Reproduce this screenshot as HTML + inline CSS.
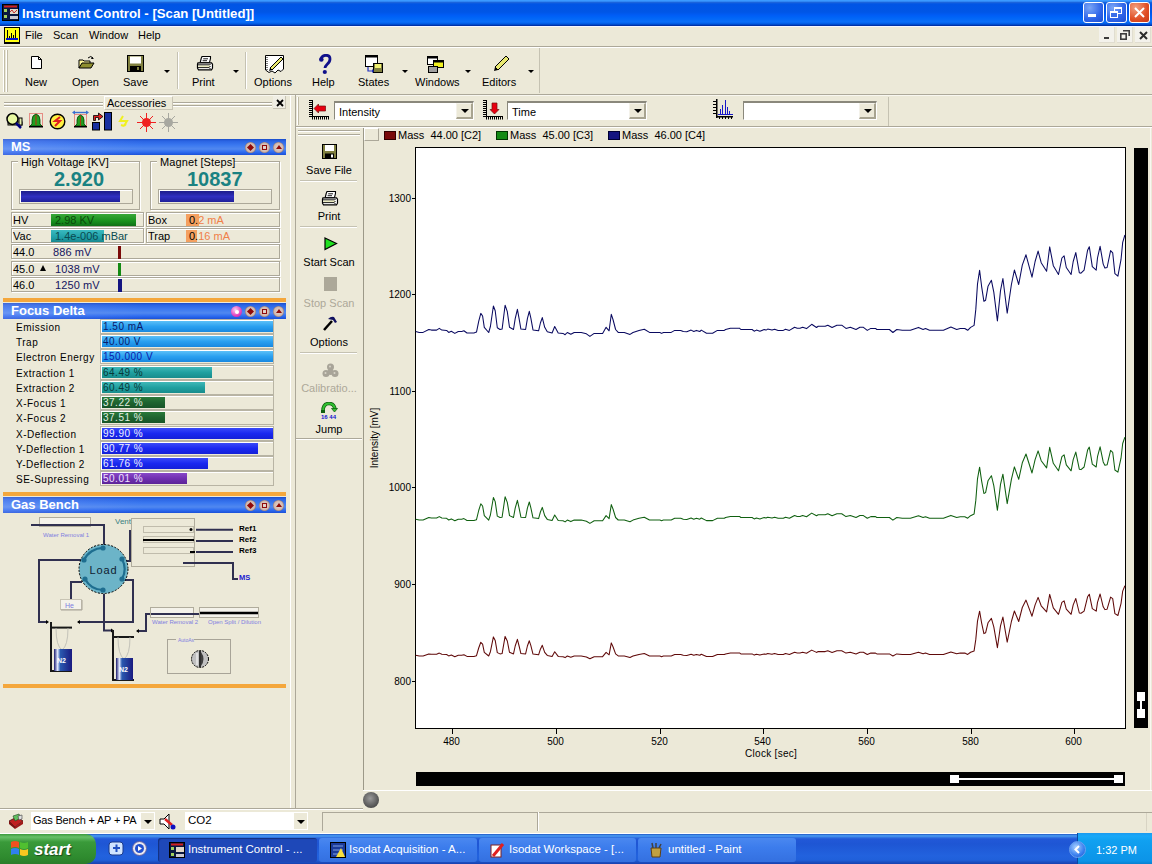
<!DOCTYPE html>
<html><head><meta charset="utf-8">
<style>
*{margin:0;padding:0;box-sizing:border-box}
html,body{width:1152px;height:864px;overflow:hidden}
body{background:#ECE9D8;font-family:"Liberation Sans",sans-serif;font-size:11px;color:#000;position:relative}
.a{position:absolute}
.t{position:absolute;white-space:nowrap;line-height:1}
</style></head><body>

<!-- TITLE BAR -->
<div class="a" style="left:0;top:0;width:1152px;height:26px;background:linear-gradient(#3C9CFF 0,#3A98FF 1px,#1A64DC 2.5px,#0055E5 4px,#0056E6 12px,#005CF5 15px,#0066F8 18px,#0A6EF8 22px,#0058E0 24px,#0032A8 25.5px,#0032A8 26px)"></div>
<div class="t" style="left:22px;top:7px;font-size:13.2px;font-weight:bold;color:#fff">Instrument Control - [Scan [Untitled]]</div>


<svg class="a" style="left:2px;top:4px" width="17" height="17" viewBox="0 0 17 17"><rect x="0.5" y="0.5" width="16" height="16" fill="#0A1840" stroke="#000"/><rect x="2" y="1.5" width="13" height="2" fill="#D02020"/><rect x="2" y="5" width="3" height="3" fill="#A0D060"/><rect x="2" y="11" width="3" height="3" fill="#A0D060"/><rect x="8" y="5" width="8" height="5" fill="#E0D8C8"/><path d="M8 8L10 6L12 9L15 6" stroke="#C03030" fill="none"/><rect x="8" y="12" width="8" height="3" fill="#C8C8D0"/></svg>
<!-- window buttons -->
<div class="a" style="left:1083px;top:2px;width:21px;height:21px;border:1px solid #fff;border-radius:3px;background:radial-gradient(circle at 30% 25%,#7AA6F6,#2E64E8 60%,#1E4FD0)"></div>
<div class="a" style="left:1088px;top:14px;width:8px;height:3px;background:#fff"></div>
<div class="a" style="left:1106px;top:2px;width:21px;height:21px;border:1px solid #fff;border-radius:3px;background:radial-gradient(circle at 30% 25%,#7AA6F6,#2E64E8 60%,#1E4FD0)"></div>
<div class="a" style="left:1114px;top:7px;width:8px;height:7px;border:1px solid #fff;border-top-width:2px"></div>
<div class="a" style="left:1110px;top:11px;width:8px;height:7px;border:1px solid #fff;border-top-width:2px;background:#3A6EE8"></div>
<div class="a" style="left:1129px;top:2px;width:21px;height:21px;border:1px solid #fff;border-radius:3px;background:radial-gradient(circle at 30% 25%,#F2A080,#E04E24 60%,#C83A18)"></div>
<svg class="a" style="left:1129px;top:2px" width="21" height="21" viewBox="0 0 21 21"><path d="M6 6L15 15M15 6L6 15" stroke="#fff" stroke-width="2"/></svg>
<!-- menu icon -->
<svg class="a" style="left:4px;top:27px" width="17" height="17" viewBox="0 0 17 17"><rect x="0" y="0" width="16" height="17" fill="#000"/><rect x="1" y="1" width="14" height="14" fill="#FFFF10"/><rect x="3" y="3" width="1" height="9" fill="#000"/><rect x="5" y="9" width="1" height="3" fill="#000"/><rect x="7" y="6" width="1" height="6" fill="#000"/><rect x="9" y="8" width="1" height="4" fill="#000"/><rect x="11" y="3" width="1" height="9" fill="#000"/><rect x="2" y="11" width="12" height="2" fill="#0010D0"/></svg>
<!-- MENU BAR -->
<div class="a" style="left:0;top:26px;width:1152px;height:1px;background:#F4F6FF"></div>
<div class="t" style="left:25px;top:30px;font-size:11px">File</div>
<div class="t" style="left:53px;top:30px;font-size:11px">Scan</div>
<div class="t" style="left:89px;top:30px;font-size:11px">Window</div>
<div class="t" style="left:138px;top:30px;font-size:11px">Help</div>
<div class="a" style="left:0;top:46px;width:1152px;height:1px;background:#ACA899"></div>
<div class="a" style="left:0;top:47px;width:1152px;height:1px;background:#fff"></div>

<!-- MDI buttons -->
<div class="a" style="left:1099px;top:27px;width:16px;height:16px;background:#F3F2EC;border-right:1px solid #E0DDD0;border-bottom:1px solid #E0DDD0"></div>
<div class="a" style="left:1117px;top:27px;width:16px;height:16px;background:#F3F2EC;border-right:1px solid #E0DDD0;border-bottom:1px solid #E0DDD0"></div>
<div class="a" style="left:1135px;top:27px;width:16px;height:16px;background:#F3F2EC;border-right:1px solid #E0DDD0;border-bottom:1px solid #E0DDD0"></div>
<div class="a" style="left:1104px;top:37px;width:5px;height:2px;background:#3C3C3C"></div>
<svg class="a" style="left:1120px;top:30px" width="10" height="10" viewBox="0 0 10 10"><path d="M3 0.8H9.2V6" fill="none" stroke="#3C3C3C" stroke-width="1.6"/><rect x="0.8" y="3.8" width="5.4" height="5.4" fill="none" stroke="#3C3C3C" stroke-width="1.6"/></svg>
<svg class="a" style="left:1139px;top:31px" width="9" height="9" viewBox="0 0 9 9"><path d="M1 1L8 8M8 1L1 8" stroke="#2C2C2C" stroke-width="2"/></svg>
<!-- TOOLBAR -->
<!-- grip -->
<div class="a" style="left:3px;top:50px;width:2px;height:42px;border-left:1px solid #fff;border-right:1px solid #C1BCA8"></div>
<div class="a" style="left:6px;top:50px;width:2px;height:42px;border-left:1px solid #fff;border-right:1px solid #C1BCA8"></div>
<!-- New -->
<svg class="a" style="left:30px;top:55px" width="13" height="15" viewBox="0 0 13 15"><path d="M1.5 1.5H8.5L11.5 4.5V13.5H1.5Z" fill="#fff" stroke="#000"/><path d="M8.5 1.5V4.5H11.5" fill="none" stroke="#000"/></svg>
<div class="t" style="left:25px;top:77px">New</div>
<!-- Open -->
<svg class="a" style="left:78px;top:55px" width="18" height="15" viewBox="0 0 18 15"><path d="M1 5H5L6 6H12V9H4L1 13Z" fill="#FFF799" stroke="#000" stroke-width="1"/><path d="M1 13L4 8H16L13 13Z" fill="#8E8E2E" stroke="#000" stroke-width="1"/><path d="M10 3Q13 0 15 3" fill="none" stroke="#000"/><path d="M14 2L16 4L13 4Z" fill="#000"/></svg>
<div class="t" style="left:72px;top:77px">Open</div>
<!-- Save -->
<svg class="a" style="left:127px;top:55px" width="17" height="17" viewBox="0 0 17 17"><rect x="0.5" y="0.5" width="16" height="16" fill="#808040" stroke="#000"/><rect x="3" y="1.5" width="11" height="7" fill="#fff"/><rect x="3" y="11" width="11" height="5" fill="#000"/><rect x="10" y="12" width="2" height="3" fill="#808040"/></svg>
<div class="t" style="left:123px;top:77px">Save</div>
<div class="a" style="left:164px;top:70px;width:0;height:0;border-left:3px solid transparent;border-right:3px solid transparent;border-top:3px solid #000"></div>
<div class="a" style="left:177px;top:52px;width:2px;height:37px;border-left:1px solid #C5C2B2;border-right:1px solid #fff"></div>
<!-- Print -->
<svg class="a" style="left:192px;top:52px" width="28" height="20" viewBox="0 0 28 20"><path d="M10 4.5H18.5V6.5L17.5 10.5H8.2L9.2 6.5Z" fill="#fff" stroke="#000" stroke-width="1.1"/><path d="M11.2 6.8H16M10.6 8.7H15" stroke="#000" stroke-width="0.9"/><path d="M6 10.8H19.5L20.5 12.2V16.2L19.5 17.8H6.5L5.5 16.2V12.2Z" fill="#fff" stroke="#000" stroke-width="1.2"/><rect x="6.5" y="13.3" width="11.5" height="2" fill="#ECECC0"/><path d="M6 12.8H17.5M6 15.6H17.5" stroke="#000" stroke-width="0.9"/><path d="M18 12V17" stroke="#000" stroke-dasharray="1 1" stroke-width="1"/></svg>
<div class="t" style="left:192px;top:77px">Print</div>
<div class="a" style="left:233px;top:70px;width:0;height:0;border-left:3px solid transparent;border-right:3px solid transparent;border-top:3px solid #000"></div>
<div class="a" style="left:245px;top:52px;width:2px;height:37px;border-left:1px solid #C5C2B2;border-right:1px solid #fff"></div>
<!-- Options -->
<svg class="a" style="left:264px;top:54px" width="21" height="21" viewBox="0 0 21 21"><path d="M1.5 1.5H19.5V15L17 17.5L14 16L11 19L8 17L5 18.5L1.5 16Z" fill="#fff" stroke="#000"/><path d="M3 3V16" stroke="#000" stroke-dasharray="1 1"/><path d="M6 14L17 3L19 5L8 16Z" fill="#E8E870" stroke="#000"/><path d="M6 14L5 17L8 16Z" fill="#000"/></svg>
<div class="t" style="left:254px;top:77px">Options</div>
<!-- Help -->
<svg class="a" style="left:318px;top:54px" width="14" height="21" viewBox="0 0 14 21"><path d="M3 5Q4 1.3 8 1.3Q12 1.3 12 5Q12 8 9 10.5Q7 12.5 7 14" fill="none" stroke="#10108A" stroke-width="2.8"/><circle cx="3.3" cy="5.5" r="2.3" fill="#10108A"/><circle cx="6.8" cy="18" r="2.1" fill="#10108A"/></svg>
<div class="t" style="left:312px;top:77px">Help</div>
<!-- States -->
<svg class="a" style="left:364px;top:54px" width="20" height="20" viewBox="0 0 20 20"><rect x="1.5" y="1.5" width="12" height="11" fill="#fff" stroke="#000"/><rect x="1.5" y="1.5" width="12" height="2" fill="#000"/><rect x="9.5" y="9.5" width="9" height="9" fill="#808040" stroke="#000"/><rect x="11" y="10" width="6" height="4" fill="#F0F070"/><path d="M4 13V17H9" fill="none" stroke="#2030C0" stroke-width="1.2"/><path d="M8 15L10 17L8 19Z" fill="#2030C0"/></svg>
<div class="t" style="left:358px;top:77px">States</div>
<div class="a" style="left:402px;top:70px;width:0;height:0;border-left:3px solid transparent;border-right:3px solid transparent;border-top:3px solid #000"></div>
<!-- Windows -->
<svg class="a" style="left:427px;top:56px" width="18" height="17" viewBox="0 0 18 17"><rect x="0.5" y="0.5" width="10" height="8" fill="#fff" stroke="#000"/><rect x="0.5" y="0.5" width="10" height="2" fill="#000"/><rect x="6.5" y="4.5" width="10" height="7" fill="#F0F020" stroke="#000"/><rect x="6.5" y="4.5" width="10" height="2" fill="#000"/><rect x="1.5" y="10.5" width="9" height="6" fill="#A0A0A0" stroke="#000"/></svg>
<div class="t" style="left:415px;top:77px">Windows</div>
<div class="a" style="left:465px;top:70px;width:0;height:0;border-left:3px solid transparent;border-right:3px solid transparent;border-top:3px solid #000"></div>
<!-- Editors -->
<svg class="a" style="left:493px;top:55px" width="17" height="17" viewBox="0 0 17 17"><path d="M2 12L13 1L16 4L5 15Z" fill="#E8E870" stroke="#000"/><path d="M2 12L1 16L5 15Z" fill="#000"/></svg>
<div class="t" style="left:482px;top:77px">Editors</div>
<div class="a" style="left:528px;top:70px;width:0;height:0;border-left:3px solid transparent;border-right:3px solid transparent;border-top:3px solid #000"></div>
<div class="a" style="left:539px;top:48px;width:1px;height:45px;background:#C5C2B2"></div>

<div class="a" style="left:0;top:94px;width:1152px;height:1px;background:#ACA899"></div>
<div class="a" style="left:0;top:95px;width:1152px;height:1px;background:#F8F7F0"></div>

<!-- LEFT PANEL -->
<style>
.grip{position:absolute;height:2px;border-top:1px solid #ACA899;border-bottom:1px solid #fff}
.etch{position:absolute;border:1px solid #ACA899;box-shadow:inset 1px 1px 0 #fff,1px 1px 0 #fff}
.hdr{position:absolute;left:3px;width:283px;height:16px;background:linear-gradient(90deg,rgba(200,200,255,0.22),rgba(200,200,255,0.08) 30%,rgba(200,200,255,0) 50%),linear-gradient(#1A4CC8 0,#2A64E4 2px,#3A78F0 6px,#5088F0 10px,#2E6CF0 13px,#1A50D8 16px)}
.hdr span{position:absolute;left:8px;top:1px;font-size:13px;font-weight:bold;color:#fff;line-height:14px}
.orn{position:absolute;left:3px;width:283px;height:4px;background:#F4A73C}
.hb{position:absolute;width:11px;height:11px;border-radius:50%;background:radial-gradient(circle at 50% 50%,#E8D8D0 0,#D0B8B0 55%,#806058 80%,#5A4848 100%)}
.hb i{position:absolute;left:3px;top:3px;width:5px;height:5px;background:#900A0A}
.rowt{position:absolute;font-size:11px;line-height:12px;white-space:nowrap}
</style>
<div class="grip" style="left:4px;top:102px;width:99px"></div>
<div class="grip" style="left:4px;top:105px;width:99px"></div>
<div class="grip" style="left:173px;top:102px;width:99px"></div>
<div class="grip" style="left:173px;top:105px;width:99px"></div>
<div class="a" style="left:104px;top:96px;width:69px;height:14px;border-right:1px solid #C8C4B4;border-bottom:1px solid #C8C4B4;border-top:1px solid #fff;border-left:1px solid #fff"></div>
<div class="t" style="left:107px;top:98px;font-size:11px">Accessories</div>
<div class="a" style="left:273px;top:96px;width:13px;height:13px;border-right:1px solid #C8C4B4;border-bottom:1px solid #C8C4B4;background:#F0EEE4"></div>
<svg class="a" style="left:276px;top:99px" width="8" height="8" viewBox="0 0 8 8"><path d="M1 1L7 7M7 1L1 7" stroke="#000" stroke-width="1.8"/></svg>
<!-- accessory icons -->
<svg class="a" style="left:5px;top:112px" width="18" height="18" viewBox="0 0 18 18"><rect x="3" y="10" width="14" height="3" fill="#E8F0B0" stroke="#000" stroke-width="1"/><rect x="14" y="6" width="3" height="7" fill="#E8F0B0" stroke="#000" stroke-width="1"/><circle cx="7.5" cy="7" r="5.5" fill="#E8F8A0" stroke="#000" stroke-width="1.5"/><path d="M11 11L16 16" stroke="#000080" stroke-width="2.5"/></svg>
<svg class="a" style="left:28px;top:112px" width="16" height="16" viewBox="0 0 16 16"><rect x="1.5" y="1.5" width="13" height="13" fill="none" stroke="#E03030" stroke-dasharray="1 1"/><path d="M8 2Q4 3 4 8V12L2 14H14L12 12V8Q12 3 8 2Z" fill="#20A020" stroke="#004000" stroke-width="0.8"/><rect x="7.4" y="3" width="1.2" height="10" fill="#A04010"/><rect x="1" y="14" width="14" height="1.5" fill="#000"/></svg>
<svg class="a" style="left:49px;top:113px" width="17" height="17" viewBox="0 0 17 17"><circle cx="8.5" cy="8.5" r="7.3" fill="#FFF040" stroke="#000" stroke-width="1.4"/><path d="M11 4L6 8H11L6 13" fill="none" stroke="#E02020" stroke-width="2"/></svg>
<svg class="a" style="left:71px;top:110px" width="19" height="19" viewBox="0 0 19 19"><path d="M2 2.5H17" stroke="#3A70D0" stroke-width="1.4"/><path d="M1 2.5L4 0.5V4.5Z M18 2.5L15 0.5V4.5Z" fill="#3A70D0"/><rect x="3.5" y="4.5" width="12" height="12" fill="none" stroke="#E03030" stroke-dasharray="1 1"/><path d="M9.5 5Q6 6 6 10V14L4 16H15L13 14V10Q13 6 9.5 5Z" fill="#20A020" stroke="#004000" stroke-width="0.8"/><rect x="8.9" y="6" width="1.2" height="10" fill="#A04010"/><rect x="3" y="16" width="13" height="1.5" fill="#000"/></svg>
<svg class="a" style="left:92px;top:110px" width="21" height="21" viewBox="0 0 21 21"><rect x="0.5" y="12.5" width="7" height="7.5" fill="#1830A0" stroke="#000"/><rect x="12.5" y="2.5" width="7" height="17.5" fill="#1830A0" stroke="#000"/><path d="M1.5 10.5V5.5H6.5V3L11 6.5L6.5 10V7.5H3.5V10.5Z" fill="#E02020" stroke="#000" stroke-width="0.8"/></svg>
<svg class="a" style="left:117px;top:115px" width="14" height="13" viewBox="0 0 14 13"><path d="M6 1L3 6H10L7 11M7 11L4 10M7 11L9 9" fill="none" stroke="#F0F020" stroke-width="2"/></svg>
<svg class="a" style="left:137px;top:113px" width="19" height="19" viewBox="0 0 19 19"><path d="M9.5 0V19M0 9.5H19M3 3L16 16M16 3L3 16" stroke="#F02020" stroke-width="1"/><circle cx="9.5" cy="9.5" r="4.5" fill="#F02020"/></svg>
<svg class="a" style="left:159px;top:113px" width="19" height="19" viewBox="0 0 19 19"><path d="M9.5 0V19M0 9.5H19M3 3L16 16M16 3L3 16" stroke="#A8A8A0" stroke-width="1"/><circle cx="9.5" cy="9.5" r="4.5" fill="#A8A8A0"/></svg>

<!-- MS -->
<div class="hdr" style="top:139px"><span>MS</span></div>
<div class="hb" style="left:245px;top:142px"><i style="transform:rotate(45deg);left:3px;top:3px"></i></div>
<div class="hb" style="left:259px;top:142px"><i style="background:none;border:1.5px solid #900A0A"></i></div>
<div class="hb" style="left:273px;top:142px"><i style="background:none;width:0;height:0;border-left:3px solid transparent;border-right:3px solid transparent;border-bottom:4px solid #900A0A;left:2.5px;top:3px"></i></div>
<div class="etch" style="left:11px;top:161px;width:129px;height:49px"></div>
<div class="a" style="left:18px;top:157px;width:92px;height:8px;background:#ECE9D8"></div>
<div class="t" style="left:21px;top:157px;font-size:11px;letter-spacing:0.1px">High Voltage [KV]</div>
<div class="t" style="left:54px;top:169px;font-size:20px;font-weight:bold;color:#1A8282">2.920</div>
<div class="a" style="left:19px;top:189px;width:114px;height:15px;border:1px solid #ACA899;background:#ECE9D8;box-shadow:inset 1px 1px 0 #fff"></div>
<div class="a" style="left:21px;top:191px;width:99px;height:11px;background:linear-gradient(#1D1D8A,#3030C0 50%,#20209A)"></div>
<div class="etch" style="left:150px;top:161px;width:130px;height:49px"></div>
<div class="a" style="left:157px;top:157px;width:77px;height:8px;background:#ECE9D8"></div>
<div class="t" style="left:160px;top:157px;font-size:11px;letter-spacing:0.1px">Magnet [Steps]</div>
<div class="t" style="left:187px;top:169px;font-size:20px;font-weight:bold;color:#1A8282">10837</div>
<div class="a" style="left:158px;top:189px;width:114px;height:15px;border:1px solid #ACA899;background:#ECE9D8;box-shadow:inset 1px 1px 0 #fff"></div>
<div class="a" style="left:160px;top:191px;width:74px;height:11px;background:linear-gradient(#1D1D8A,#3030C0 50%,#20209A)"></div>

<div class="etch" style="left:11px;top:212px;width:133px;height:15px"></div>
<div class="a" style="left:51px;top:214px;width:85px;height:12px;background:linear-gradient(#3AA83A,#18901E 60%,#107018)"></div>
<div class="rowt" style="left:13px;top:214px">HV</div>
<div class="rowt" style="left:55px;top:214px;color:#0A4A0A">2.98 KV</div>
<div class="etch" style="left:11px;top:228px;width:133px;height:15px"></div>
<div class="a" style="left:51px;top:230px;width:53px;height:12px;background:linear-gradient(#3ABAC0,#20A0A8 60%,#188890)"></div>
<div class="rowt" style="left:13px;top:230px">Vac</div>
<div class="rowt" style="left:55px;top:230px;color:#0A4A50">1.4e-006 mBar</div>
<div class="etch" style="left:146px;top:212px;width:134px;height:15px"></div>
<div class="a" style="left:186px;top:214px;width:13px;height:12px;background:#F4A060"></div>
<div class="rowt" style="left:148px;top:214px">Box</div>
<div class="rowt" style="left:189px;top:214px;color:#F08048"><span style="color:#000">0.</span>2 mA</div>
<div class="etch" style="left:146px;top:228px;width:134px;height:15px"></div>
<div class="a" style="left:186px;top:230px;width:11px;height:12px;background:#F4A060"></div>
<div class="rowt" style="left:148px;top:230px">Trap</div>
<div class="rowt" style="left:189px;top:230px;color:#F08048"><span style="color:#000">0.</span>16 mA</div>

<div class="etch" style="left:11px;top:244px;width:269px;height:15px"></div>
<div class="rowt" style="left:13px;top:246px">44.0</div>
<div class="rowt" style="left:53px;top:246px;color:#141460;letter-spacing:0.1px">886 mV</div>
<div class="a" style="left:118px;top:246px;width:3px;height:13px;background:#7A0A0A"></div>
<div class="etch" style="left:11px;top:261px;width:269px;height:15px"></div>
<div class="rowt" style="left:13px;top:263px">45.0</div>
<div class="a" style="left:40px;top:265px;width:0;height:0;border-left:3px solid transparent;border-right:3px solid transparent;border-bottom:6px solid #000"></div>
<div class="rowt" style="left:55px;top:263px;color:#141460;letter-spacing:0.1px">1038 mV</div>
<div class="a" style="left:118px;top:263px;width:3px;height:13px;background:#148A14"></div>
<div class="etch" style="left:11px;top:277px;width:269px;height:15px"></div>
<div class="rowt" style="left:13px;top:279px">46.0</div>
<div class="rowt" style="left:55px;top:279px;color:#141460;letter-spacing:0.1px">1250 mV</div>
<div class="a" style="left:118px;top:279px;width:4px;height:13px;background:#141480"></div>

<div class="orn" style="top:298px"></div>
<!-- FOCUS DELTA -->
<div class="hdr" style="top:303px"><span>Focus Delta</span></div>
<div class="hb" style="left:231px;top:306px;background:radial-gradient(circle at 40% 35%,#F8D0F0,#E040C0 60%,#B02090)"><i style="background:#fff;border-radius:50%;left:3.5px;top:3.5px;width:4px;height:4px"></i></div>
<div class="hb" style="left:245px;top:306px"><i style="transform:rotate(45deg)"></i></div>
<div class="hb" style="left:259px;top:306px"><i style="background:none;border:1.5px solid #900A0A"></i></div>
<div class="hb" style="left:273px;top:306px"><i style="background:none;width:0;height:0;border-left:3px solid transparent;border-right:3px solid transparent;border-bottom:4px solid #900A0A;left:2.5px;top:3px"></i></div>
<div class="rowt" style="left:16px;top:322px;font-size:10px;letter-spacing:0.5px">Emission</div>
<div class="a" style="left:100px;top:319px;width:174px;height:15px;border:1px solid #B8B4A4;box-shadow:inset 1px 1px 0 #fff"></div>
<div class="a" style="left:102px;top:321px;width:171px;height:11px;background:linear-gradient(#5CC0F8,#2AA0F0 50%,#1888E0)"></div>
<div class="rowt" style="left:103px;top:321px;color:#0A1A6A;font-size:10px;letter-spacing:0.5px">1.50 mA</div>
<div class="rowt" style="left:16px;top:337px;font-size:10px;letter-spacing:0.5px">Trap</div>
<div class="a" style="left:100px;top:334px;width:174px;height:15px;border:1px solid #B8B4A4;box-shadow:inset 1px 1px 0 #fff"></div>
<div class="a" style="left:102px;top:336px;width:171px;height:11px;background:linear-gradient(#5CC0F8,#2AA0F0 50%,#1888E0)"></div>
<div class="rowt" style="left:103px;top:336px;color:#0A1A6A;font-size:10px;letter-spacing:0.5px">40.00 V</div>
<div class="rowt" style="left:16px;top:352px;font-size:10px;letter-spacing:0.5px">Electron Energy</div>
<div class="a" style="left:100px;top:349px;width:174px;height:15px;border:1px solid #B8B4A4;box-shadow:inset 1px 1px 0 #fff"></div>
<div class="a" style="left:102px;top:351px;width:171px;height:11px;background:linear-gradient(#5CC0F8,#2AA0F0 50%,#1888E0)"></div>
<div class="rowt" style="left:103px;top:351px;color:#0A1AAA;font-size:10px;letter-spacing:0.5px">150.000 V</div>
<div class="rowt" style="left:16px;top:368px;font-size:10px;letter-spacing:0.5px">Extraction 1</div>
<div class="a" style="left:100px;top:365px;width:174px;height:15px;border:1px solid #B8B4A4;box-shadow:inset 1px 1px 0 #fff"></div>
<div class="a" style="left:102px;top:367px;width:110px;height:11px;background:linear-gradient(#40B8B8,#20A0A0 50%,#188C8C)"></div>
<div class="rowt" style="left:103px;top:367px;color:#083838;font-size:10px;letter-spacing:0.5px">64.49 %</div>
<div class="rowt" style="left:16px;top:383px;font-size:10px;letter-spacing:0.5px">Extraction 2</div>
<div class="a" style="left:100px;top:380px;width:174px;height:15px;border:1px solid #B8B4A4;box-shadow:inset 1px 1px 0 #fff"></div>
<div class="a" style="left:102px;top:382px;width:103px;height:11px;background:linear-gradient(#40B8B8,#20A0A0 50%,#188C8C)"></div>
<div class="rowt" style="left:103px;top:382px;color:#083838;font-size:10px;letter-spacing:0.5px">60.49 %</div>
<div class="rowt" style="left:16px;top:398px;font-size:10px;letter-spacing:0.5px">X-Focus 1</div>
<div class="a" style="left:100px;top:395px;width:174px;height:15px;border:1px solid #B8B4A4;box-shadow:inset 1px 1px 0 #fff"></div>
<div class="a" style="left:102px;top:397px;width:63px;height:11px;background:linear-gradient(#2A7A3A,#1E6430 50%,#185428)"></div>
<div class="rowt" style="left:103px;top:397px;color:#E0F0E0;font-size:10px;letter-spacing:0.5px">37.22 %</div>
<div class="rowt" style="left:16px;top:413px;font-size:10px;letter-spacing:0.5px">X-Focus 2</div>
<div class="a" style="left:100px;top:410px;width:174px;height:15px;border:1px solid #B8B4A4;box-shadow:inset 1px 1px 0 #fff"></div>
<div class="a" style="left:102px;top:412px;width:63px;height:11px;background:linear-gradient(#2A7A3A,#1E6430 50%,#185428)"></div>
<div class="rowt" style="left:103px;top:412px;color:#E0F0E0;font-size:10px;letter-spacing:0.5px">37.51 %</div>
<div class="rowt" style="left:16px;top:429px;font-size:10px;letter-spacing:0.5px">X-Deflection</div>
<div class="a" style="left:100px;top:426px;width:174px;height:15px;border:1px solid #B8B4A4;box-shadow:inset 1px 1px 0 #fff"></div>
<div class="a" style="left:102px;top:428px;width:171px;height:11px;background:linear-gradient(#3A4AF8,#1A28F0 50%,#1420D8)"></div>
<div class="rowt" style="left:103px;top:428px;color:#F0F0FF;font-size:10px;letter-spacing:0.5px">99.90 %</div>
<div class="rowt" style="left:16px;top:444px;font-size:10px;letter-spacing:0.5px">Y-Deflection 1</div>
<div class="a" style="left:100px;top:441px;width:174px;height:15px;border:1px solid #B8B4A4;box-shadow:inset 1px 1px 0 #fff"></div>
<div class="a" style="left:102px;top:443px;width:156px;height:11px;background:linear-gradient(#3A4AF8,#1A28F0 50%,#1420D8)"></div>
<div class="rowt" style="left:103px;top:443px;color:#F0F0FF;font-size:10px;letter-spacing:0.5px">90.77 %</div>
<div class="rowt" style="left:16px;top:459px;font-size:10px;letter-spacing:0.5px">Y-Deflection 2</div>
<div class="a" style="left:100px;top:456px;width:174px;height:15px;border:1px solid #B8B4A4;box-shadow:inset 1px 1px 0 #fff"></div>
<div class="a" style="left:102px;top:458px;width:106px;height:11px;background:linear-gradient(#3A4AF8,#1A28F0 50%,#1420D8)"></div>
<div class="rowt" style="left:103px;top:458px;color:#F0F0FF;font-size:10px;letter-spacing:0.5px">61.76 %</div>
<div class="rowt" style="left:16px;top:474px;font-size:10px;letter-spacing:0.5px">SE-Supressing</div>
<div class="a" style="left:100px;top:471px;width:174px;height:15px;border:1px solid #B8B4A4;box-shadow:inset 1px 1px 0 #fff"></div>
<div class="a" style="left:102px;top:473px;width:85px;height:11px;background:linear-gradient(#8848C8,#7030B0 50%,#5C2498)"></div>
<div class="rowt" style="left:103px;top:473px;color:#F0E0FF;font-size:10px;letter-spacing:0.5px">50.01 %</div>
<div class="orn" style="top:492px"></div>
<!-- GAS BENCH -->
<div class="hdr" style="top:497px"><span>Gas Bench</span></div>
<div class="hb" style="left:245px;top:500px"><i style="transform:rotate(45deg)"></i></div>
<div class="hb" style="left:259px;top:500px"><i style="background:none;border:1.5px solid #900A0A"></i></div>
<div class="hb" style="left:273px;top:500px"><i style="background:none;width:0;height:0;border-left:3px solid transparent;border-right:3px solid transparent;border-bottom:4px solid #900A0A;left:2.5px;top:3px"></i></div>
<svg class="a" style="left:0;top:513px" width="290" height="172" viewBox="0 513 290 172">
 <g fill="none" stroke="#303050" stroke-width="2">
  <path d="M31 525H104V545"/>
  <path d="M84 560H39V622H46"/>
  <path d="M82 582H71V600"/>
  <path d="M125 580H133V622H78"/>
  <path d="M104 594V630.5H111"/>
  <path d="M130 530V561H125"/>
  <path d="M196 529.7H233M196 541H233M196 552H233"/>
  <path d="M183 563H233V579H238"/>
  <path d="M150 614H146V631H137"/>
  <path d="M194 614H199"/>
 </g>
 <rect x="39.5" y="517.5" width="51" height="9" fill="#F4F2EA" stroke="#B0AC9C"/>
 <path d="M39 525H91" stroke="#303050" stroke-width="2"/>
 <text x="43" y="537" font-size="6" fill="#8080E0" font-family="Liberation Sans">Water Removal 1</text>
 <text x="115" y="524" font-size="8" fill="#3A8080" font-family="Liberation Sans">Vent</text>
 <rect x="131.5" y="518.5" width="63" height="48" fill="#ECE9D8" stroke="#B0AC9C"/>
 <rect x="143.5" y="526.5" width="50" height="6" fill="none" stroke="#C0BCAC"/>
 <rect x="143.5" y="536.5" width="50" height="6" fill="none" stroke="#C0BCAC"/>
 <rect x="143.5" y="547.5" width="50" height="6" fill="none" stroke="#C0BCAC"/>
 <path d="M143 540H194" stroke="#000" stroke-width="2"/>
 <circle cx="191" cy="529.5" r="1.5" fill="#000"/>
 <path d="M190 552H195" stroke="#000" stroke-width="2"/>
 <path d="M183 563H195" stroke="#303050" stroke-width="2"/>
 <text x="239" y="531" font-size="8" font-weight="bold" fill="#000" font-family="Liberation Sans">Ref1</text>
 <text x="239" y="542" font-size="8" font-weight="bold" fill="#000" font-family="Liberation Sans">Ref2</text>
 <text x="239" y="553" font-size="8" font-weight="bold" fill="#000" font-family="Liberation Sans">Ref3</text>
 <text x="239" y="580" font-size="7.5" font-weight="bold" fill="#2020D0" font-family="Liberation Sans">MS</text>
 <circle cx="103.5" cy="569" r="24.5" fill="#6CB4C8" stroke="#000" stroke-width="1" stroke-dasharray="2 1.5"/>
 <g fill="none" stroke="#1E6E90" stroke-width="2.2">
  <path d="M84 560A21 21 0 0 1 103 548"/>
  <path d="M122 559A21 21 0 0 1 122 579"/>
  <path d="M85 579A21 21 0 0 0 103 590"/>
 </g>
 <g fill="#1E6E90"><circle cx="103" cy="548" r="2.6"/><circle cx="84" cy="560" r="2.6"/><circle cx="122" cy="559" r="2.6"/><circle cx="85" cy="579" r="2.6"/><circle cx="122" cy="579" r="2.6"/><circle cx="103" cy="590" r="2.6"/></g>
 <text x="89.5" y="573.5" font-size="11" fill="#102030" font-family="Liberation Sans" letter-spacing="0.9">Load</text>
 <rect x="60.5" y="599.5" width="21" height="10" fill="#F4F2EA" stroke="#C8C4B4"/>
 <path d="M61 610H82V600" fill="none" stroke="#A8A498"/>
 <text x="65" y="608" font-size="7" fill="#8080E0" font-family="Liberation Sans">He</text>
 <g fill="#000"><path d="M46 620L49 622L46 624Z"/><path d="M80 620L77 622L80 624Z"/><path d="M111 628.5L114 630.5L111 632.5Z"/><path d="M139 629L136 631L139 633Z"/></g>
 <g fill="none" stroke="#181818" stroke-width="2"><path d="M51 622V671H72"/><path d="M51 627.6H72"/><path d="M113 630V680H134"/><path d="M113 637H134"/></g>
 <g fill="none" stroke="#B8B8B0" stroke-width="0.8"><path d="M56 628Q56 646 62 650Q68 646 68 628"/><path d="M118 637Q118 655 124 659Q130 655 130 637"/></g>
 <defs><linearGradient id="n2" x1="0" x2="1"><stop offset="0" stop-color="#1A1A70"/><stop offset="0.2" stop-color="#E0E8FF"/><stop offset="0.35" stop-color="#2A5AB0"/><stop offset="1" stop-color="#1A1A80"/></linearGradient></defs>
 <rect x="54" y="649" width="18" height="22" fill="url(#n2)"/>
 <rect x="116" y="658" width="17" height="22" fill="url(#n2)"/>
 <text x="57" y="663" font-size="7" font-weight="bold" fill="#fff" font-family="Liberation Sans">N2</text>
 <text x="119" y="672" font-size="7" font-weight="bold" fill="#fff" font-family="Liberation Sans">N2</text>
 <rect x="150.5" y="607.5" width="43" height="10" fill="#F4F2EA" stroke="#B0AC9C"/>
 <path d="M151 614H194" stroke="#303050" stroke-width="2"/>
 <rect x="199.5" y="607.5" width="59" height="10" fill="#F4F2EA" stroke="#B0AC9C"/>
 <path d="M200 613H258" stroke="#000" stroke-width="2.4"/>
 <text x="152" y="624" font-size="6" fill="#8080E0" font-family="Liberation Sans">Water Removal 2</text>
 <text x="208" y="624" font-size="6" fill="#8080E0" font-family="Liberation Sans">Open Split / Dilution</text>
 <rect x="167.5" y="639.5" width="63" height="34" fill="none" stroke="#A8A498"/>
 <rect x="176" y="636" width="18" height="6" fill="#ECE9D8"/>
 <text x="178" y="642" font-size="5" fill="#8080E0" font-family="Liberation Sans">AutoAs</text>
 <circle cx="200" cy="659" r="8.5" fill="#C0C0C0" stroke="#000" stroke-dasharray="2 1"/>
 <path d="M200 651V667" stroke="#000" stroke-width="1.5"/><path d="M197 653V665" stroke="#fff" stroke-width="1"/>
 <path d="M201 652Q206 659 201 666Z" fill="#404040"/>
</svg>
<div class="orn" style="top:684px"></div>
<!-- splitter -->
<div class="a" style="left:290px;top:95px;width:1px;height:713px;background:#fff"></div>
<div class="a" style="left:295px;top:95px;width:1px;height:713px;background:#ACA899"></div>

<!-- CHART TOOLBAR -->
<div class="a" style="left:297px;top:97px;width:2px;height:28px;border-left:1px solid #fff;border-right:1px solid #C1BCA8"></div>
<div class="a" style="left:296px;top:126px;width:856px;height:1px;background:#ACA899"></div>
<div class="a" style="left:296px;top:127px;width:856px;height:1px;background:#fff"></div>
<div class="a" style="left:888px;top:97px;width:1px;height:29px;background:#C5C2B2"></div>
<style>
.combo{position:absolute;height:19px;background:#fff;border-top:2px solid #8A887C;border-left:1px solid #8A887C;border-bottom:1px solid #fff;border-right:1px solid #fff}
.combo b{position:absolute;right:0;top:0;width:17px;height:16px;background:#ECE9D8;border-right:2px solid #A8A490;border-bottom:2px solid #A8A490;border-top:1px solid #F4F2EA;border-left:1px solid #F4F2EA}
.combo b:after{content:"";position:absolute;left:4px;top:5px;border-left:4px solid transparent;border-right:4px solid transparent;border-top:4px solid #000}
.combo span{position:absolute;left:4px;top:3px;font-size:11px;line-height:12px;white-space:nowrap}
</style>
<svg class="a" style="left:309px;top:100px" width="20" height="20" viewBox="0 0 20 20"><g fill="#000"><rect x="3" y="0" width="1" height="17"/><rect x="0" y="16" width="20" height="1"/><rect x="0" y="0" width="3" height="1"/><rect x="0" y="2" width="3" height="1"/><rect x="0" y="4" width="3" height="1"/><rect x="0" y="6" width="3" height="1"/><rect x="0" y="8" width="3" height="1"/><rect x="0" y="10" width="3" height="1"/><rect x="0" y="12" width="3" height="1"/><rect x="0" y="14" width="3" height="1"/><rect x="3" y="17" width="1" height="2.5"/><rect x="5" y="17" width="1" height="2.5"/><rect x="7" y="17" width="1" height="2.5"/><rect x="9" y="17" width="1" height="2.5"/><rect x="11" y="17" width="1" height="2.5"/><rect x="13" y="17" width="1" height="2.5"/><rect x="15" y="17" width="1" height="2.5"/><rect x="17" y="17" width="1" height="2.5"/><rect x="19" y="17" width="1" height="2.5"/></g><path d="M5 8.5L9.5 4V6H16.5V11H9.5V13Z" fill="#E80010" stroke="#701010" stroke-width="0.7"/></svg>
<div class="combo" style="left:334px;top:101px;width:140px"><span>Intensity</span><b></b></div>
<svg class="a" style="left:483px;top:100px" width="20" height="20" viewBox="0 0 20 20"><g fill="#000"><rect x="3" y="0" width="1" height="17"/><rect x="0" y="16" width="20" height="1"/><rect x="0" y="0" width="3" height="1"/><rect x="0" y="2" width="3" height="1"/><rect x="0" y="4" width="3" height="1"/><rect x="0" y="6" width="3" height="1"/><rect x="0" y="8" width="3" height="1"/><rect x="0" y="10" width="3" height="1"/><rect x="0" y="12" width="3" height="1"/><rect x="0" y="14" width="3" height="1"/><rect x="3" y="17" width="1" height="2.5"/><rect x="5" y="17" width="1" height="2.5"/><rect x="7" y="17" width="1" height="2.5"/><rect x="9" y="17" width="1" height="2.5"/><rect x="11" y="17" width="1" height="2.5"/><rect x="13" y="17" width="1" height="2.5"/><rect x="15" y="17" width="1" height="2.5"/><rect x="17" y="17" width="1" height="2.5"/><rect x="19" y="17" width="1" height="2.5"/></g><path d="M11.5 14L7 9.5H9V3H14V9.5H16Z" fill="#E80010" stroke="#701010" stroke-width="0.7"/></svg>
<div class="combo" style="left:507px;top:101px;width:140px"><span>Time</span><b></b></div>
<svg class="a" style="left:713px;top:99px" width="20" height="20" viewBox="0 0 20 20"><rect x="3" y="0" width="1.5" height="19" fill="#000"/><rect x="3" y="17" width="17" height="1.5" fill="#000"/><g fill="#000"><rect x="0" y="2" width="3" height="1"/><rect x="0" y="5" width="3" height="1"/><rect x="0" y="8" width="3" height="1"/><rect x="0" y="11" width="3" height="1"/><rect x="0" y="14" width="3" height="1"/><rect x="6" y="18" width="1" height="2"/><rect x="9" y="18" width="1" height="2"/><rect x="12" y="18" width="1" height="2"/><rect x="15" y="18" width="1" height="2"/><rect x="18" y="18" width="1" height="2"/></g><g fill="#1818C8"><rect x="7" y="10" width="1" height="6"/><rect x="9" y="6" width="1" height="10"/><rect x="12" y="1" width="1" height="15"/><rect x="14" y="8" width="1" height="8"/><rect x="16" y="12" width="1" height="4"/><rect x="5" y="15" width="15" height="1"/></g></svg>
<div class="combo" style="left:743px;top:101px;width:134px"><b></b></div>

<!-- MIDDLE PANEL -->
<div class="a" style="left:363px;top:128px;width:1px;height:662px;background:#9C9988"></div>
<div class="grip" style="left:298px;top:130px;width:62px"></div>
<div class="grip" style="left:298px;top:134px;width:62px"></div>
<style>.ml{position:absolute;left:296px;width:66px;text-align:center;font-size:11px;line-height:12px;white-space:nowrap}
.sep{position:absolute;left:300px;width:57px;height:2px;border-top:1px solid #C5C2B2;border-bottom:1px solid #fff}</style>
<svg class="a" style="left:322px;top:144px" width="15" height="15" viewBox="0 0 15 15"><rect x="0.5" y="0.5" width="14" height="14" fill="#808040" stroke="#000"/><rect x="3" y="1" width="9" height="6" fill="#fff"/><rect x="3" y="9.5" width="9" height="5" fill="#000"/><rect x="9" y="10.5" width="2" height="3" fill="#fff"/></svg>
<div class="ml" style="top:164px">Save File</div>
<div class="sep" style="top:180px"></div>
<svg class="a" style="left:317px;top:187px" width="28" height="20" viewBox="0 0 28 20"><path d="M10 4.5H18.5V6.5L17.5 10.5H8.2L9.2 6.5Z" fill="#fff" stroke="#000" stroke-width="1.1"/><path d="M11.2 6.8H16M10.6 8.7H15" stroke="#000" stroke-width="0.9"/><path d="M6 10.8H19.5L20.5 12.2V16.2L19.5 17.8H6.5L5.5 16.2V12.2Z" fill="#fff" stroke="#000" stroke-width="1.2"/><rect x="6.5" y="13.3" width="11.5" height="2" fill="#ECECC0"/><path d="M6 12.8H17.5M6 15.6H17.5" stroke="#000" stroke-width="0.9"/><path d="M18 12V17" stroke="#000" stroke-dasharray="1 1" stroke-width="1"/></svg>
<div class="ml" style="top:210px">Print</div>
<div class="sep" style="top:226px"></div>
<svg class="a" style="left:324px;top:237px" width="14" height="14" viewBox="0 0 14 14"><path d="M1 1L12.5 6.5L1 12.5Z" fill="#20E020" stroke="#000" stroke-width="1.2"/></svg>
<div class="ml" style="top:256px">Start Scan</div>
<div class="a" style="left:324px;top:277px;width:13px;height:14px;background:#ACA899"></div>
<div class="ml" style="top:297px;color:#ACA899">Stop Scan</div>
<svg class="a" style="left:322px;top:316px" width="16" height="15" viewBox="0 0 16 15"><path d="M2 14L10 5" stroke="#000" stroke-width="2.5"/><path d="M6 3Q9 0 12 1L15 6L13 7L11 4Z" fill="#101060"/></svg>
<div class="ml" style="top:336px">Options</div>
<div class="sep" style="top:352px"></div>
<svg class="a" style="left:322px;top:363px" width="17" height="15" viewBox="0 0 17 15"><g fill="#A8A498"><circle cx="8.5" cy="4" r="3.5"/><circle cx="4" cy="10.5" r="3.5"/><circle cx="13" cy="10.5" r="3.5"/><circle cx="8.5" cy="9" r="3"/></g><g fill="#D8D4C8"><circle cx="8" cy="3.5" r="1"/><circle cx="3.5" cy="10" r="1"/><circle cx="12.5" cy="10" r="1"/></g></svg>
<div class="ml" style="top:382px;color:#ACA899">Calibratio...</div>
<svg class="a" style="left:320px;top:402px" width="18" height="17" viewBox="0 0 18 17"><path d="M3 9Q3 1.5 9 1.5Q14 1.5 15 7" fill="none" stroke="#106010" stroke-width="3.5"/><path d="M3 9Q3 1.5 9 1.5Q14 1.5 15 7" fill="none" stroke="#30C030" stroke-width="2"/><path d="M11.5 6.5H17.5L14.5 10Z" fill="#30C030" stroke="#106010" stroke-width="0.8"/><rect x="1" y="8" width="4" height="3" fill="#106010"/><text x="1" y="16.5" font-size="6" font-weight="bold" fill="#1010D0" font-family="Liberation Sans">16 44</text></svg>
<div class="ml" style="top:423px">Jump</div>
<div class="a" style="left:296px;top:438px;width:66px;height:2px;border-top:1px solid #ACA899;border-bottom:1px solid #fff"></div>

<!-- LEGEND -->
<div class="a" style="left:364px;top:128px;width:15px;height:13px;background:#ECE9D8;border-top:1px solid #fff;border-left:1px solid #fff;border-right:1px solid #ACA899;border-bottom:1px solid #ACA899"></div>
<div class="a" style="left:384px;top:131px;width:12px;height:9px;background:#7A0A0A;border:1px solid #300"></div>
<div class="t" style="left:398px;top:130px;font-size:11px">Mass&nbsp; 44.00 [C2]</div>
<div class="a" style="left:496px;top:131px;width:12px;height:9px;background:#148A14;border:1px solid #030"></div>
<div class="t" style="left:510px;top:130px;font-size:11px">Mass&nbsp; 45.00 [C3]</div>
<div class="a" style="left:608px;top:131px;width:12px;height:9px;background:#141480;border:1px solid #003"></div>
<div class="t" style="left:622px;top:130px;font-size:11px">Mass&nbsp; 46.00 [C4]</div>

<!-- CHART -->
<div class="a" style="left:415px;top:147px;width:711px;height:582px;background:#fff;border:1px solid #000"></div>
<div class="a" style="left:1134px;top:148px;width:14px;height:580px;background:#000"></div>
<div class="a" style="left:1137px;top:692px;width:8px;height:9px;background:#fff"></div>
<div class="a" style="left:1140px;top:700px;width:2px;height:9px;background:#fff"></div>
<div class="a" style="left:1137px;top:709px;width:8px;height:9px;background:#fff"></div>
<div class="a" style="left:416px;top:772px;width:709px;height:14px;background:#000"></div>
<div class="a" style="left:950px;top:775px;width:9px;height:8px;background:#fff"></div>
<div class="a" style="left:958px;top:778px;width:157px;height:2px;background:#fff"></div>
<div class="a" style="left:1114px;top:775px;width:9px;height:8px;background:#fff"></div>
<div class="a" style="left:363px;top:790px;width:789px;height:1px;background:#fff"></div>
<div class="a" style="left:363px;top:792px;width:16px;height:16px;border-radius:50%;background:radial-gradient(circle at 45% 40%,#9A9A9A,#5A5A5A 60%,#303030)"></div>
<!-- TRACES -->
<svg class="a" style="left:0;top:0" width="1152" height="864" viewBox="0 0 1152 864"><g fill="none" stroke-width="1.05" stroke-linejoin="round">
<path stroke="#0A0A60" d="M415.7 331.5 L419.2 332.4 L423.1 332.4 L428.8 329.5 L431.4 330.1 L436.6 330.1 L439.3 328.4 L441.8 330.1 L446.6 330.4 L448.7 332.4 L451.3 331.2 L454.8 333.4 L458.3 331.5 L461.7 331.5 L463.9 330.8 L467.0 333.0 L473.9 333.0 L476.5 332.1 L478.7 321.3 L480.8 313.4 L482.6 316.0 L484.3 327.3 L488.7 332.5 L490.4 326.5 L493.4 306.0 L495.2 310.8 L497.3 327.8 L500.0 329.5 L502.1 329.1 L505.1 305.2 L507.3 311.7 L509.5 327.3 L513.5 329.5 L515.2 318.6 L517.4 309.3 L519.1 318.6 L520.9 329.1 L525.6 329.5 L527.4 318.6 L529.3 311.3 L530.8 317.8 L533.0 329.9 L538.6 330.8 L540.4 323.0 L542.3 317.6 L544.7 327.3 L547.3 331.7 L552.1 333.0 L554.7 326.5 L558.2 333.0 L563.0 333.4 L565.1 334.7 L567.3 332.5 L570.8 334.3 L574.2 332.5 L581.2 332.5 L586.4 333.8 L589.9 336.4 L594.2 333.4 L602.6 333.4 L606.1 327.3 L609.1 330.8 L611.3 314.3 L613.0 319.5 L615.6 329.5 L618.2 332.4 L624.3 332.5 L630.0 334.4 L633.0 332.5 L639.0 330.4 L644.3 329.2 L649.5 332.4 L659.9 332.5 L661.6 333.4 L663.4 332.5 L671.2 332.4 L674.7 330.4 L680.7 330.4 L683.3 331.5 L686.8 331.7 L691.1 330.1 L693.8 331.5 L696.4 330.4 L699.8 331.5 L701.3 330.1 L706.5 333.2 L712.6 333.2 L717.4 330.4 L724.3 330.4 L725.6 329.5 L730.4 328.2 L739.5 328.2 L740.8 329.5 L752.1 329.5 L754.2 331.2 L756.4 330.1 L759.9 331.2 L764.2 329.5 L766.0 330.1 L767.7 329.1 L772.0 330.1 L774.6 329.2 L778.1 330.4 L783.3 330.4 L785.5 329.2 L789.4 330.4 L794.6 327.2 L797.2 328.2 L800.0 328.2 L802.6 327.2 L806.5 328.6 L811.7 324.3 L816.5 327.5 L818.2 326.3 L825.2 326.3 L827.8 325.2 L832.1 327.5 L836.9 325.2 L841.7 325.2 L846.0 328.4 L850.3 327.2 L856.0 329.5 L859.9 327.2 L863.4 327.3 L867.3 330.4 L870.8 328.4 L875.5 328.4 L876.8 329.5 L889.4 329.5 L892.9 332.5 L896.8 329.5 L902.3 330.3 L910.4 330.3 L918.5 327.4 L923.1 329.4 L925.5 328.5 L929.5 330.3 L943.4 330.3 L950.9 327.0 L956.7 329.4 L960.2 328.5 L964.8 328.5 L967.7 330.3 L970.6 327.4 L974.1 325.4 L975.8 309.4 L977.5 284.0 L979.6 270.3 L981.6 286.3 L983.9 301.3 L985.6 300.2 L988.0 286.3 L991.4 280.3 L993.8 292.1 L997.4 321.0 L1000.5 290.6 L1002.9 278.5 L1007.2 313.1 L1011.4 284.5 L1014.4 270.0 L1018.7 284.5 L1022.3 265.1 L1026.0 254.8 L1032.0 277.2 L1035.1 261.5 L1038.1 251.1 L1041.2 262.7 L1046.6 271.2 L1049.7 246.9 L1053.3 265.7 L1058.5 274.5 L1061.9 258.0 L1064.1 255.8 L1066.3 267.5 L1071.1 274.5 L1073.2 261.5 L1075.8 252.6 L1079.3 272.7 L1081.0 273.2 L1084.1 270.1 L1087.6 250.2 L1089.3 246.7 L1092.3 266.7 L1096.2 270.1 L1097.5 258.0 L1100.1 246.3 L1103.2 264.1 L1104.9 268.0 L1107.1 267.5 L1110.6 250.6 L1112.7 252.8 L1114.9 273.6 L1117.9 276.2 L1121.0 259.7 L1122.7 242.4 L1124.9 235.0"/>
<path stroke="#106010" d="M415.7 519.2 L419.2 520.0 L423.1 520.0 L428.8 517.5 L431.4 518.0 L436.6 518.0 L439.3 516.6 L441.8 518.0 L446.6 518.3 L448.7 520.0 L451.3 518.9 L454.8 520.8 L458.3 519.2 L461.7 519.2 L463.9 518.6 L467.0 520.5 L473.9 520.5 L476.5 519.7 L478.7 510.5 L480.8 503.8 L482.6 506.0 L484.3 515.6 L488.7 520.1 L490.4 515.0 L493.4 497.5 L495.2 501.6 L497.3 516.1 L500.0 517.5 L502.1 517.2 L505.1 496.8 L507.3 502.4 L509.5 515.6 L513.5 517.5 L515.2 508.2 L517.4 500.3 L519.1 508.2 L520.9 517.2 L525.6 517.5 L527.4 508.2 L529.3 502.0 L530.8 507.6 L533.0 517.8 L538.6 518.6 L540.4 512.0 L542.3 507.4 L544.7 515.6 L547.3 519.4 L552.1 520.5 L554.7 515.0 L558.2 520.5 L563.0 520.8 L565.1 521.9 L567.3 520.1 L570.8 521.6 L574.2 520.1 L581.2 520.1 L586.4 521.2 L589.9 523.4 L594.2 520.8 L602.6 520.8 L606.1 515.6 L609.1 518.6 L611.3 504.6 L613.0 509.0 L615.6 517.5 L618.2 520.0 L624.3 520.1 L630.0 521.7 L633.0 520.1 L639.0 518.3 L644.3 517.2 L649.5 520.0 L659.9 520.1 L661.6 520.8 L663.4 520.1 L671.2 520.0 L674.7 518.3 L680.7 518.3 L683.3 519.2 L686.8 519.4 L691.1 518.0 L693.8 519.2 L696.4 518.3 L699.8 519.2 L701.3 518.0 L706.5 520.6 L712.6 520.6 L717.4 518.3 L724.3 518.3 L725.6 517.5 L730.4 516.4 L739.5 516.4 L740.8 517.5 L752.1 517.5 L754.2 518.9 L756.4 518.0 L759.9 518.9 L764.2 517.5 L766.0 518.0 L767.7 517.2 L772.0 518.0 L774.6 517.2 L778.1 518.3 L783.3 518.3 L785.5 517.2 L789.4 518.3 L794.6 515.5 L797.2 516.4 L800.0 516.4 L802.6 515.5 L806.5 516.7 L811.7 513.1 L816.5 515.8 L818.2 514.8 L825.2 514.8 L827.8 513.8 L832.1 515.8 L836.9 513.8 L841.7 513.8 L846.0 516.6 L850.3 515.5 L856.0 517.5 L859.9 515.5 L863.4 515.6 L867.3 518.3 L870.8 516.6 L875.5 516.6 L876.8 517.5 L889.4 517.5 L892.9 520.1 L896.8 517.5 L902.3 518.2 L910.4 518.2 L918.5 515.7 L923.1 517.4 L925.5 516.7 L929.5 518.2 L943.4 518.2 L950.9 515.4 L956.7 517.4 L960.2 516.7 L964.8 516.7 L967.7 518.2 L970.6 515.7 L974.1 514.0 L975.8 500.4 L977.5 478.8 L979.6 467.2 L981.6 480.8 L983.9 493.5 L985.6 492.6 L988.0 480.8 L991.4 475.7 L993.8 485.7 L997.4 510.3 L1000.5 484.4 L1002.9 474.2 L1007.2 503.6 L1011.4 479.3 L1014.4 466.9 L1018.7 479.3 L1022.3 462.8 L1026.0 454.0 L1032.0 473.0 L1035.1 459.7 L1038.1 450.9 L1041.2 460.7 L1046.6 467.9 L1049.7 447.3 L1053.3 463.3 L1058.5 470.8 L1061.9 456.7 L1064.1 454.9 L1066.3 464.8 L1071.1 470.8 L1073.2 459.7 L1075.8 452.1 L1079.3 469.2 L1081.0 469.6 L1084.1 467.0 L1087.6 450.1 L1089.3 447.1 L1092.3 464.1 L1096.2 467.0 L1097.5 456.7 L1100.1 446.8 L1103.2 461.9 L1104.9 465.2 L1107.1 464.8 L1110.6 450.4 L1112.7 452.3 L1114.9 470.0 L1117.9 472.2 L1121.0 458.2 L1122.7 443.5 L1124.9 437.2"/>
<path stroke="#600A0A" d="M415.7 655.3 L419.2 655.9 L423.1 655.9 L428.8 653.9 L431.4 654.3 L436.6 654.3 L439.3 653.1 L441.8 654.3 L446.6 654.5 L448.7 655.9 L451.3 655.1 L454.8 656.7 L458.3 655.3 L461.7 655.3 L463.9 654.8 L467.0 656.4 L473.9 656.4 L476.5 655.7 L478.7 648.0 L480.8 642.3 L482.6 644.1 L484.3 652.3 L488.7 656.0 L490.4 651.7 L493.4 636.9 L495.2 640.4 L497.3 652.6 L500.0 653.9 L502.1 653.6 L505.1 636.4 L507.3 641.0 L509.5 652.3 L513.5 653.9 L515.2 646.0 L517.4 639.3 L519.1 646.0 L520.9 653.6 L525.6 653.9 L527.4 646.0 L529.3 640.8 L530.8 645.4 L533.0 654.1 L538.6 654.8 L540.4 649.2 L542.3 645.3 L544.7 652.3 L547.3 655.4 L552.1 656.4 L554.7 651.7 L558.2 656.4 L563.0 656.7 L565.1 657.6 L567.3 656.0 L570.8 657.3 L574.2 656.0 L581.2 656.0 L586.4 657.0 L589.9 658.8 L594.2 656.7 L602.6 656.7 L606.1 652.3 L609.1 654.8 L611.3 642.9 L613.0 646.7 L615.6 653.9 L618.2 655.9 L624.3 656.0 L630.0 657.4 L633.0 656.0 L639.0 654.5 L644.3 653.6 L649.5 655.9 L659.9 656.0 L661.6 656.7 L663.4 656.0 L671.2 655.9 L674.7 654.5 L680.7 654.5 L683.3 655.3 L686.8 655.4 L691.1 654.3 L693.8 655.3 L696.4 654.5 L699.8 655.3 L701.3 654.3 L706.5 656.5 L712.6 656.5 L717.4 654.5 L724.3 654.5 L725.6 653.9 L730.4 652.9 L739.5 652.9 L740.8 653.9 L752.1 653.9 L754.2 655.1 L756.4 654.3 L759.9 655.1 L764.2 653.9 L766.0 654.3 L767.7 653.6 L772.0 654.3 L774.6 653.6 L778.1 654.5 L783.3 654.5 L785.5 653.6 L789.4 654.5 L794.6 652.2 L797.2 652.9 L800.0 652.9 L802.6 652.2 L806.5 653.2 L811.7 650.1 L816.5 652.4 L818.2 651.6 L825.2 651.6 L827.8 650.8 L832.1 652.4 L836.9 650.8 L841.7 650.8 L846.0 653.1 L850.3 652.2 L856.0 653.9 L859.9 652.2 L863.4 652.3 L867.3 654.5 L870.8 653.1 L875.5 653.1 L876.8 653.9 L889.4 653.9 L892.9 656.0 L896.8 653.9 L902.3 654.4 L910.4 654.4 L918.5 652.3 L923.1 653.8 L925.5 653.1 L929.5 654.4 L943.4 654.4 L950.9 652.1 L956.7 653.8 L960.2 653.1 L964.8 653.1 L967.7 654.4 L970.6 652.3 L974.1 650.9 L975.8 639.4 L977.5 621.1 L979.6 611.2 L981.6 622.8 L983.9 633.6 L985.6 632.8 L988.0 622.8 L991.4 618.4 L993.8 626.9 L997.4 647.7 L1000.5 625.9 L1002.9 617.1 L1007.2 642.1 L1011.4 621.5 L1014.4 611.0 L1018.7 621.5 L1022.3 607.5 L1026.0 600.1 L1032.0 616.2 L1035.1 604.9 L1038.1 597.4 L1041.2 605.8 L1046.6 611.9 L1049.7 594.4 L1053.3 607.9 L1058.5 614.3 L1061.9 602.4 L1064.1 600.8 L1066.3 609.2 L1071.1 614.3 L1073.2 604.9 L1075.8 598.5 L1079.3 613.0 L1081.0 613.3 L1084.1 611.1 L1087.6 596.8 L1089.3 594.2 L1092.3 608.6 L1096.2 611.1 L1097.5 602.4 L1100.1 594.0 L1103.2 606.8 L1104.9 609.6 L1107.1 609.2 L1110.6 597.1 L1112.7 598.6 L1114.9 613.6 L1117.9 615.5 L1121.0 603.6 L1122.7 591.1 L1124.9 585.8"/>
</g></svg>
<div class="a" style="left:1150px;top:128px;width:1px;height:662px;background:#F8F7F0"></div>
<div class="a" style="left:1146px;top:812px;width:1px;height:19px;background:#D8D4C4"></div>
<!-- AXES -->
<div class="a" style="left:412px;top:198px;width:3px;height:1px;background:#000"></div>
<div class="t" style="left:371px;top:194px;width:40px;text-align:right;font-size:10px;line-height:9px">1300</div>
<div class="a" style="left:412px;top:294px;width:3px;height:1px;background:#000"></div>
<div class="t" style="left:371px;top:290px;width:40px;text-align:right;font-size:10px;line-height:9px">1200</div>
<div class="a" style="left:412px;top:391px;width:3px;height:1px;background:#000"></div>
<div class="t" style="left:371px;top:387px;width:40px;text-align:right;font-size:10px;line-height:9px">1100</div>
<div class="a" style="left:412px;top:487px;width:3px;height:1px;background:#000"></div>
<div class="t" style="left:371px;top:483px;width:40px;text-align:right;font-size:10px;line-height:9px">1000</div>
<div class="a" style="left:412px;top:584px;width:3px;height:1px;background:#000"></div>
<div class="t" style="left:371px;top:580px;width:40px;text-align:right;font-size:10px;line-height:9px">900</div>
<div class="a" style="left:412px;top:681px;width:3px;height:1px;background:#000"></div>
<div class="t" style="left:371px;top:677px;width:40px;text-align:right;font-size:10px;line-height:9px">800</div>
<div class="a" style="left:452px;top:729px;width:1px;height:5px;background:#000"></div>
<div class="t" style="left:431px;top:737px;width:41px;text-align:center;font-size:10px;line-height:9px">480</div>
<div class="a" style="left:556px;top:729px;width:1px;height:5px;background:#000"></div>
<div class="t" style="left:535px;top:737px;width:41px;text-align:center;font-size:10px;line-height:9px">500</div>
<div class="a" style="left:660px;top:729px;width:1px;height:5px;background:#000"></div>
<div class="t" style="left:639px;top:737px;width:41px;text-align:center;font-size:10px;line-height:9px">520</div>
<div class="a" style="left:763px;top:729px;width:1px;height:5px;background:#000"></div>
<div class="t" style="left:742px;top:737px;width:41px;text-align:center;font-size:10px;line-height:9px">540</div>
<div class="a" style="left:867px;top:729px;width:1px;height:5px;background:#000"></div>
<div class="t" style="left:846px;top:737px;width:41px;text-align:center;font-size:10px;line-height:9px">560</div>
<div class="a" style="left:971px;top:729px;width:1px;height:5px;background:#000"></div>
<div class="t" style="left:950px;top:737px;width:41px;text-align:center;font-size:10px;line-height:9px">580</div>
<div class="a" style="left:1074px;top:729px;width:1px;height:5px;background:#000"></div>
<div class="t" style="left:1053px;top:737px;width:41px;text-align:center;font-size:10px;line-height:9px">600</div>
<div class="t" style="left:745px;top:749px;font-size:10px;letter-spacing:0.3px">Clock [sec]</div>
<div class="t" style="left:335px;top:433px;width:80px;text-align:center;font-size:10px;transform:rotate(-90deg)">Intensity [mV]</div>
<!-- STATUS BAR -->
<div class="a" style="left:0;top:808px;width:363px;height:1px;background:#ACA899"></div>
<div class="a" style="left:0;top:809px;width:363px;height:1px;background:#fff"></div>
<svg class="a" style="left:7px;top:813px" width="18" height="17" viewBox="0 0 18 17"><path d="M2 8L10 4L16 8L8 14Z" fill="#C02020" stroke="#401010" stroke-width="0.8"/><path d="M2 8V11L8 16V14Z" fill="#801010"/><path d="M8 14V16L16 11V8Z" fill="#A01818"/><path d="M6 3L12 1L14 5L8 8Z" fill="#60C060" stroke="#204020" stroke-width="0.6"/><path d="M11 3L15 2V6L12 7Z" fill="#E0E0E0" stroke="#404040" stroke-width="0.6"/></svg>
<div class="a" style="left:31px;top:812px;width:124px;height:18px;background:#fff"></div>
<div class="a" style="left:141px;top:813px;width:13px;height:16px;background:#ECE9D8"></div>
<div class="a" style="left:144px;top:820px;border-left:4px solid transparent;border-right:4px solid transparent;border-top:4px solid #000"></div>
<div class="t" style="left:33px;top:815px;font-size:11px;letter-spacing:-0.2px">Gas Bench + AP + PA</div>
<svg class="a" style="left:159px;top:813px" width="18" height="17" viewBox="0 0 18 17"><path d="M1 6H5L10 1V16L5 11H1Z" fill="#fff" stroke="#000" stroke-width="1"/><path d="M6 6L13 12" stroke="#E02020" stroke-width="2.5"/><circle cx="14" cy="14" r="2.5" fill="#1010C0"/></svg>
<div class="a" style="left:185px;top:812px;width:123px;height:18px;background:#fff"></div>
<div class="a" style="left:294px;top:813px;width:13px;height:16px;background:#ECE9D8"></div>
<div class="a" style="left:297px;top:820px;border-left:4px solid transparent;border-right:4px solid transparent;border-top:4px solid #000"></div>
<div class="t" style="left:188px;top:815px;font-size:11.5px">CO2</div>
<div class="a" style="left:322px;top:812px;width:830px;height:19px;border-top:1px solid #ACA899;border-left:1px solid #ACA899"></div>
<div class="a" style="left:537px;top:812px;width:1px;height:19px;background:#ACA899"></div>
<div class="a" style="left:538px;top:812px;width:1px;height:19px;background:#fff"></div>
<!-- TASKBAR -->
<div class="a" style="left:0;top:833px;width:1152px;height:1px;background:#fff"></div><div class="a" style="left:0;top:834px;width:1152px;height:30px;background:linear-gradient(#1A4AB8 0,#3A88E8 1px,#4A9AF0 2px,#3274E2 3.5px,#2258D8 5px,#1E56D4 10px,#2262DE 22px,#2060DA 26px,#1A48B8 29px,#1840B0 30px)"></div>
<div class="a" style="left:0;top:834px;width:96px;height:30px;border-radius:0 10px 10px 0;background:linear-gradient(#3C9A3C 0,#68C068 3px,#3A9A3A 8px,#2E8A2E 24px,#2A7A2A 31px)"></div>
<svg class="a" style="left:10px;top:839px" width="20" height="19" viewBox="0 0 20 19"><path d="M1 3Q5 1 9 3V9Q5 7 1 9Z" fill="#F05020"/><path d="M10 3Q14 5 18 3V9Q14 11 10 9Z" fill="#50C030"/><path d="M1 10Q5 8 9 10V16Q5 14 1 16Z" fill="#3080F0"/><path d="M10 10Q14 12 18 10V16Q14 18 10 16Z" fill="#F8C820"/></svg>
<div class="t" style="left:34px;top:841px;font-size:17px;font-weight:bold;font-style:italic;color:#fff;text-shadow:1px 1px 1px #1A4A1A">start</div>
<svg class="a" style="left:108px;top:840px" width="17" height="17" viewBox="0 0 17 17"><rect x="1" y="2" width="14" height="13" rx="3" fill="#CFE4FF" stroke="#1A3A8A"/><path d="M5 8H12M8.5 4.5V12" stroke="#2050C0" stroke-width="2"/></svg>
<svg class="a" style="left:131px;top:840px" width="17" height="17" viewBox="0 0 17 17"><circle cx="8.5" cy="8.5" r="7" fill="#E8E8F0" stroke="#6060A0"/><circle cx="8.5" cy="8.5" r="4.5" fill="#2050D0"/><path d="M7 6L11 8.5L7 11Z" fill="#fff"/></svg>
<div class="a" style="left:158px;top:838px;width:159px;height:24px;border-radius:3px;background:#1E48B8;box-shadow:inset 1px 1px 1px #123080"></div>
<svg class="a" style="left:169px;top:842px" width="16" height="16" viewBox="0 0 16 16"><rect x="0.5" y="0.5" width="15" height="15" fill="#0A1840" stroke="#000"/><rect x="2" y="1.5" width="12" height="2" fill="#D02020"/><rect x="2" y="5" width="3" height="3" fill="#A0D060"/><rect x="2" y="11" width="3" height="3" fill="#A0D060"/><rect x="7" y="5" width="8" height="5" fill="#E0D8C8"/><rect x="7" y="12" width="8" height="3" fill="#C8C8D0"/></svg>
<div class="t" style="left:188px;top:844px;font-size:11.5px;color:#fff">Instrument Control - ...</div>
<div class="a" style="left:319px;top:838px;width:158px;height:24px;border-radius:3px;background:linear-gradient(#4A88F0,#3C7CEC 40%,#3470E0)"></div>
<svg class="a" style="left:330px;top:842px" width="16" height="16" viewBox="0 0 16 16"><rect x="0.5" y="0.5" width="15" height="15" fill="#1A3A9A" stroke="#000"/><path d="M3 4H13M3 8H13M3 12H13" stroke="#80A0E0"/><path d="M6 15L11 6L15 15Z" fill="#F8E040"/></svg>
<div class="t" style="left:349px;top:844px;font-size:11.5px;color:#fff">Isodat Acquisition - A...</div>
<div class="a" style="left:479px;top:838px;width:157px;height:24px;border-radius:3px;background:linear-gradient(#4A88F0,#3C7CEC 40%,#3470E0)"></div>
<svg class="a" style="left:489px;top:842px" width="16" height="16" viewBox="0 0 16 16"><rect x="2" y="3" width="10" height="12" fill="#fff" stroke="#802020"/><path d="M4 14L14 2" stroke="#E02020" stroke-width="3"/></svg>
<div class="t" style="left:509px;top:844px;font-size:11.5px;color:#fff">Isodat Workspace - [...</div>
<div class="a" style="left:638px;top:838px;width:158px;height:24px;border-radius:3px;background:linear-gradient(#4A88F0,#3C7CEC 40%,#3470E0)"></div>
<svg class="a" style="left:648px;top:842px" width="16" height="16" viewBox="0 0 16 16"><path d="M3 6H13L12 15H4Z" fill="#C0A040" stroke="#604010"/><path d="M5 6L4 1M8 6V1M11 6L13 2" stroke="#404040" stroke-width="1.5"/></svg>
<div class="t" style="left:668px;top:844px;font-size:11.5px;color:#fff">untitled - Paint</div>
<div class="a" style="left:1077px;top:833px;width:75px;height:31px;background:linear-gradient(#1A9AF0 0,#18A8F8 3px,#10A0F0 8px,#0C94E8 28px,#0A80D0 31px);border-left:1px solid #0A4AA0"></div>
<div class="a" style="left:1069px;top:841px;width:17px;height:17px;border-radius:50%;background:radial-gradient(circle at 40% 35%,#A8D0FF,#3A80F0 60%,#1A50C0);border:1px solid #6AA0F0"></div>
<svg class="a" style="left:1072px;top:844px" width="11" height="11" viewBox="0 0 11 11"><path d="M7 2L3.5 5.5L7 9" fill="none" stroke="#fff" stroke-width="2"/></svg>
<div class="t" style="left:1096px;top:845px;font-size:11px;color:#fff">1:32 PM</div>
</body></html>
